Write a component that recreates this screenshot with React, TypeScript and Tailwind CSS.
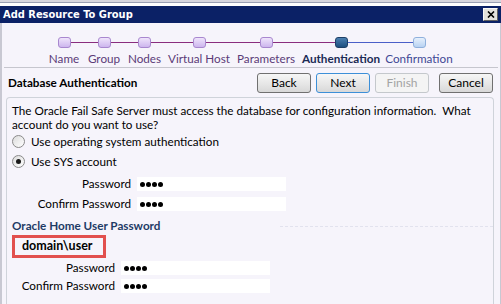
import React from "react";

const steps = [
  { label: "Name", w: "w-[40px]", state: "done" },
  { label: "Group", w: "w-[40px]", state: "done" },
  { label: "Nodes", w: "w-[41px]", state: "done" },
  { label: "Virtual Host", w: "w-[68px]", state: "done" },
  { label: "Parameters", w: "w-[66px]", state: "done" },
  { label: "Authentication", w: "w-[84px]", state: "current" },
  { label: "Confirmation", w: "w-[72px]", state: "todo" },
];

function Step({ s, i }: { s: (typeof steps)[number]; i: number }) {
  const leftColor = s.state === "todo" ? "bg-[#4a5fc8]" : "bg-[#8a2d7e]";
  const rightColor = s.state === "done" ? "bg-[#8a2d7e]" : "bg-[#4a5fc8]";
  const sq =
    s.state === "done"
      ? "bg-gradient-to-b from-[#efe4fb] to-[#cdb6ee] border-[#a887cf]"
      : s.state === "current"
      ? "bg-gradient-to-b from-[#4a7fb0] to-[#1d4f80] border-[#1d3f66]"
      : "bg-gradient-to-b from-[#e6f0fc] to-[#b8d2f2] border-[#8fb0dc]";
  const txt =
    s.state === "done"
      ? "text-[#5b3b78]"
      : s.state === "current"
      ? "text-[#1b2b55] font-bold"
      : "text-[#3f4895]";
  return (
    <div className={`flex flex-col items-center shrink-0 ${s.w}`}>
      <div className="flex items-center w-full h-[11px] shrink-0">
        <div className={`flex-1 h-[1px] ${i === 0 ? "bg-transparent" : leftColor}`} />
        <div className={`w-[13px] h-[11px] shrink-0 rounded-[3px] border ${sq}`} />
        <div className={`flex-1 h-[1px] ${i === steps.length - 1 ? "bg-transparent" : rightColor}`} />
      </div>
      <div className={`mt-[3px] whitespace-nowrap text-[11.7px] leading-[14px] ${txt}`}>{s.label}</div>
    </div>
  );
}

function Btn({ label, variant }: { label: string; variant?: "focus" | "disabled" }) {
  const border =
    variant === "focus"
      ? "border-[#3c8fd8]"
      : variant === "disabled"
      ? "border-[#c4c8cc]"
      : "border-[#707070]";
  const text = variant === "disabled" ? "text-[#a3a3a3]" : "text-black";
  const bg =
    variant === "disabled"
      ? "bg-[#f4f4f4]"
      : "bg-gradient-to-b from-[#f6f6f6] via-[#e8e8e8] to-[#d8d8d8]";
  return (
    <div
      className={`w-[54px] h-[20px] shrink-0 flex items-center justify-center rounded-[3px] border ${border} ${bg} ${text} text-[12px]`}
    >
      {label}
    </div>
  );
}

function Dots() {
  return (
    <div className="flex items-center gap-[1px] pl-[3px]">
      {[0, 1, 2, 3].map((i) => (
        <div key={i} className="w-[5px] h-[5px] rounded-full bg-black" />
      ))}
    </div>
  );
}

function Field({ label, labelW }: { label: string; labelW: string }) {
  return (
    <div className="flex items-center h-[14px] shrink-0">
      <div className={`${labelW} text-right pr-[6px] whitespace-nowrap`}>{label}</div>
      <div className="w-[149px] h-[14px] bg-white flex items-center">
        <Dots />
      </div>
    </div>
  );
}

function Radio({ checked, label }: { checked?: boolean; label: string }) {
  return (
    <div className="flex items-center h-[13px] shrink-0">
      <div className="w-[13px] h-[13px] rounded-full border border-[#8a8a8a] bg-gradient-to-br from-[#dcdcdc] to-white flex items-center justify-center">
        {checked && <div className="w-[5px] h-[5px] rounded-full bg-[#1a1a1a]" />}
      </div>
      <div className="ml-[6px] whitespace-nowrap">{label}</div>
    </div>
  );
}

export default function App() {
  return (
    <div
      className="w-[501px] h-[304px] overflow-hidden flex flex-col bg-[#f6f4fb] text-[11.7px] text-black"
      style={{ fontFamily: 'Lato, "Liberation Sans", Arial, sans-serif' }}
    >
      <div className="h-[2px] shrink-0 bg-[#d7d7df]" />
      <div className="h-[1px] shrink-0 bg-[#9aa0b4]" />
      <div className="h-[3px] shrink-0 bg-white" />
      <div className="h-[17px] shrink-0 bg-[#0b2166] flex items-center justify-between pl-[3px] pr-[3px]">
        <div
          className="text-white font-bold text-[11px] leading-[16px]"
          style={{ fontFamily: '"DejaVu Sans Condensed", "DejaVu Sans", Verdana, sans-serif', fontStretch: "condensed" }}
        >
          Add Resource To Group
        </div>
        <div className="w-[15px] h-[13px] bg-[#e4e2dc] border border-[#f8f8f8] border-r-[#606060] border-b-[#606060] flex items-center justify-center">
          <svg width="8" height="7" viewBox="0 0 8 7">
            <path d="M1 0.5 L7 6.5 M7 0.5 L1 6.5" stroke="#000" strokeWidth="1.6" />
          </svg>
        </div>
      </div>
      <div className="flex-1 flex flex-col border-l-[2px] border-[#c8c8d2] border-r-[1px]">
        <div className="flex pl-[42px] pt-[14px] shrink-0">
          {steps.map((s, i) => (
            <Step key={s.label} s={s} i={i} />
          ))}
        </div>
        <div className="mx-[2px] mt-[2px] h-[1px] shrink-0 bg-[#c6c6ce]" />
        <div className="flex items-center shrink-0 pt-[5px] pb-[4px] pl-[6px] pr-[7px]">
          <div className="font-bold flex-1">Database Authentication</div>
          <div className="flex gap-[5px]">
            <Btn label="Back" />
            <Btn label="Next" variant="focus" />
            <Btn label="Finish" variant="disabled" />
          </div>
          <div className="ml-[10px]">
            <Btn label="Cancel" />
          </div>
        </div>
        <div className="flex-1 ml-[4px] mr-[6px] border border-b-0 border-[#cfd3da] rounded-t-[4px] pl-[5px] pt-[5px] flex flex-col">
          <div className="leading-[14px] whitespace-nowrap shrink-0">
            The Oracle Fail Safe Server must access the database for configuration information.&nbsp; What
            <br />
            account do you want to use?
          </div>
          <div className="mt-[4px] flex flex-col gap-[7px] shrink-0">
            <Radio label="Use operating system authentication" />
            <Radio checked label="Use SYS account" />
          </div>
          <div className="mt-[9px] flex flex-col gap-[6px] shrink-0">
            <Field label="Password" labelW="w-[125px]" />
            <Field label="Confirm Password" labelW="w-[125px]" />
          </div>
          <div className="mt-[8px] flex items-center h-[14px] shrink-0">
            <div className="font-bold text-[#1e3b66] whitespace-nowrap">Oracle Home User Password</div>
            <div className="flex-1 ml-[120px] border-t border-dashed border-[#e2e2ee]" />
          </div>
          <div className="mt-[2px] w-[94px] h-[23px] shrink-0 border-[3px] border-[#e2504e] flex items-center pl-[7px] font-bold text-[12.5px]">
            domain\user
          </div>
          <div className="mt-[3px] flex flex-col gap-[4px] shrink-0">
            <Field label="Password" labelW="w-[109px]" />
            <Field label="Confirm Password" labelW="w-[109px]" />
          </div>
        </div>
      </div>
    </div>
  );
}
